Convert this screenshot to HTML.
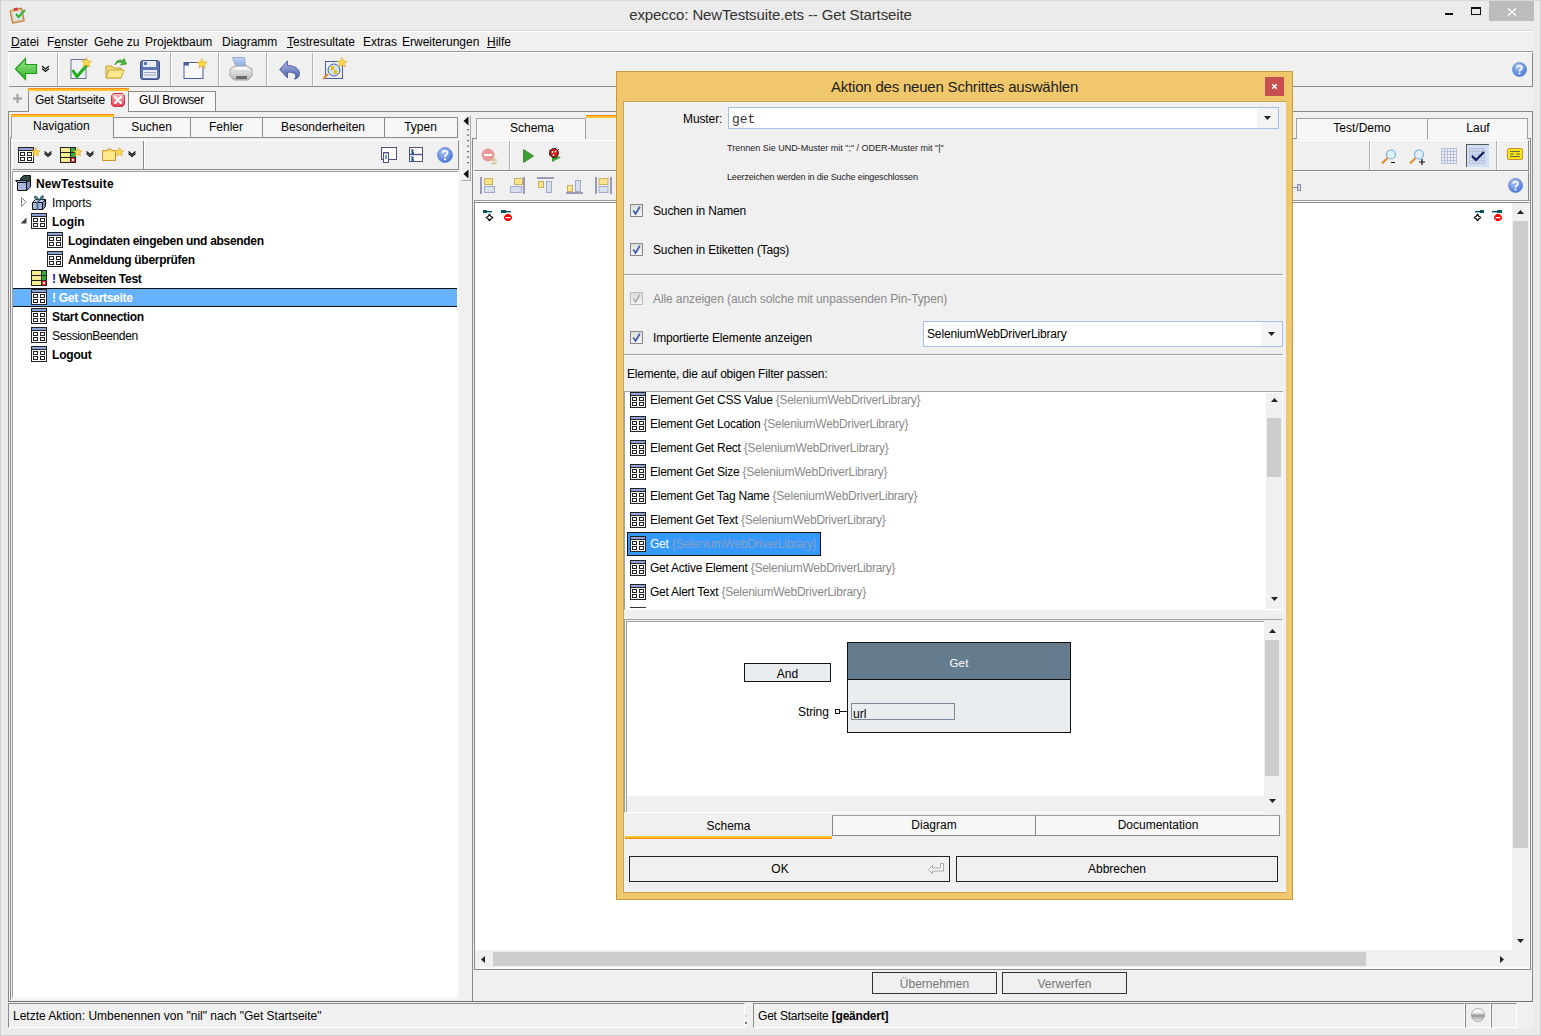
<!DOCTYPE html><html><head><meta charset="utf-8"><style>
html,body{margin:0;padding:0;}
body{width:1541px;height:1036px;position:relative;overflow:hidden;background:#ebebeb;font-family:"Liberation Sans",sans-serif;}
.a{position:absolute;box-sizing:border-box;}
.t{position:absolute;white-space:pre;}
svg{position:absolute;overflow:visible;}
</style></head><body>
<div class="a" style="left:0px;top:0px;width:1541px;height:1036px;background:#ebebeb"></div>
<div class="a" style="left:0px;top:0px;width:1px;height:1036px;background:#cfcfcf"></div>
<div class="a" style="left:0px;top:1035px;width:1541px;height:1px;background:#cfcfcf"></div>
<div class="a" style="left:1540px;top:0px;width:1px;height:1036px;background:#cfcfcf"></div>
<div class="a" style="left:0px;top:0px;width:1541px;height:1px;background:#d8d8d8"></div>
<div class="t" style="left:0px;top:7px;font-size:15px;line-height:15px;color:#333;font-family:'Liberation Sans';width:1541px;text-align:center;letter-spacing:-0.12px">expecco: NewTestsuite.ets -- Get Startseite</div>
<div class="a" style="left:1445px;top:13px;width:8px;height:2px;background:#111"></div>
<div class="a" style="left:1471px;top:7px;width:10px;height:8px;border:1px solid #111;border-top-width:2px"></div>
<div class="a" style="left:1489px;top:1px;width:45px;height:20px;background:#bcbcbc"></div>
<svg style="left:1507px;top:8px" width="10" height="8" viewBox="0 0 10 8"><path d="M1 0.5 L9 7.5 M9 0.5 L1 7.5" stroke="#fff" stroke-width="1.6"/></svg>
<svg style="left:9px;top:6px" width="18" height="17" viewBox="0 0 18 17"><g transform="rotate(-12 9 9)"><rect x="2" y="3" width="12" height="13" rx="1" fill="#e8c48a" stroke="#b07a3a"/><rect x="4" y="5" width="8" height="9" fill="#dfe8f5"/><rect x="6" y="1.5" width="4" height="3" fill="#c44" /></g><path d="M7 8 L9.5 11 L16 4" stroke="#3cb03c" stroke-width="2.2" fill="none"/></svg>
<div class="a" style="left:8px;top:30px;width:1525px;height:998px;background:#f0f0f0"></div>
<div class="a" style="left:8px;top:30px;width:1525px;height:22px;background:#f0f0f0;border-bottom:1px solid #999;border-top:1px solid #d8d8d8;box-shadow:inset 0 1px 0 #fff"></div>
<div class="t" style="left:11px;top:36px;font-size:12px;line-height:12px;color:#000;font-family:'Liberation Sans';letter-spacing:0px"><u>D</u>atei</div>
<div class="t" style="left:47px;top:36px;font-size:12px;line-height:12px;color:#000;font-family:'Liberation Sans';letter-spacing:0px">F<u>e</u>nster</div>
<div class="t" style="left:94px;top:36px;font-size:12px;line-height:12px;color:#000;font-family:'Liberation Sans';letter-spacing:0px">Gehe zu</div>
<div class="t" style="left:145px;top:36px;font-size:12px;line-height:12px;color:#000;font-family:'Liberation Sans';letter-spacing:0px">Projektbaum</div>
<div class="t" style="left:222px;top:36px;font-size:12px;line-height:12px;color:#000;font-family:'Liberation Sans';letter-spacing:0px">Diagramm</div>
<div class="t" style="left:287px;top:36px;font-size:12px;line-height:12px;color:#000;font-family:'Liberation Sans';letter-spacing:0px"><u>T</u>estresultate</div>
<div class="t" style="left:363px;top:36px;font-size:12px;line-height:12px;color:#000;font-family:'Liberation Sans';letter-spacing:0px">Extras</div>
<div class="t" style="left:402px;top:36px;font-size:12px;line-height:12px;color:#000;font-family:'Liberation Sans';letter-spacing:0px">Erweiterungen</div>
<div class="t" style="left:487px;top:36px;font-size:12px;line-height:12px;color:#000;font-family:'Liberation Sans';letter-spacing:0px"><u>H</u>ilfe</div>
<div class="a" style="left:8px;top:52px;width:1525px;height:35px;background:#f0f0f0;border-bottom:1px solid #8a8a8a;border-top:1px solid #fff;border-right:1px solid #8a8a8a"></div>
<div class="a" style="left:57px;top:53px;width:1px;height:33px;background:#b0b0b0;box-shadow:1px 0 0 #fff"></div>
<div class="a" style="left:170px;top:53px;width:1px;height:33px;background:#b0b0b0;box-shadow:1px 0 0 #fff"></div>
<div class="a" style="left:218px;top:53px;width:1px;height:33px;background:#b0b0b0;box-shadow:1px 0 0 #fff"></div>
<div class="a" style="left:266px;top:53px;width:1px;height:33px;background:#b0b0b0;box-shadow:1px 0 0 #fff"></div>
<div class="a" style="left:312px;top:53px;width:1px;height:33px;background:#b0b0b0;box-shadow:1px 0 0 #fff"></div>
<div class="a" style="left:8px;top:52px;width:1px;height:35px;background:#fff"></div>
<svg style="left:14px;top:57px" width="24" height="24" viewBox="0 0 24 24"><defs><linearGradient id="ga" x1="0" y1="0" x2="0" y2="1"><stop offset="0" stop-color="#9be88a"/><stop offset="1" stop-color="#2fb52a"/></linearGradient></defs><path d="M1.5 12 L11.5 1.5 V7.5 H22.5 V16.5 H11.5 V22.5 Z" fill="url(#ga)" stroke="#1f9a1c" stroke-width="1.2"/></svg>
<svg style="left:41px;top:65px" width="9" height="7" viewBox="0 0 9 7"><path d="M1 1 L4.5 4 L8 1 M1 3.5 L4.5 6.5 L8 3.5" stroke="#111" stroke-width="1.2" fill="none"/></svg>
<svg style="left:70px;top:57px" width="22" height="23" viewBox="0 0 22 23"><rect x="1" y="2.5" width="15" height="19" fill="#eef0f5" stroke="#6a7488"/><path d="M2.5 13 L7 19.5 L17 8" stroke="#19b019" stroke-width="3" fill="none"/><path d="M16.5 0.5 L18 4 L21.5 4.2 L18.8 6.5 L19.8 10 L16.5 8 L13.2 10 L14.2 6.5 L11.5 4.2 L15 4 Z" fill="#ffd84a" stroke="#d6a21a" stroke-width="0.6"/></svg>
<svg style="left:105px;top:57px" width="22" height="23" viewBox="0 0 22 23"><path d="M1 9 H7 L9 11 H16 V21 H1 Z" fill="#f3d774" stroke="#c9a33a"/><path d="M1 21 L4 13 H19 L16 21 Z" fill="#fbe98f" stroke="#c9a33a"/><path d="M10 8 C11 3 15 2 18 4 L19 1.5 L21.5 7 L15.5 8 L17.5 6 C15 4.5 12 5 10 8 Z" fill="#4cba3c" stroke="#2c8a22" stroke-width="0.7"/></svg>
<svg style="left:140px;top:60px" width="20" height="20" viewBox="0 0 20 20"><rect x="0.5" y="0.5" width="19" height="19" rx="2.5" fill="#5c73b5" stroke="#3d4f8a"/><rect x="3" y="1" width="13" height="6" fill="#e8ecf6"/><rect x="4" y="2" width="3" height="3" fill="#5c73b5"/><rect x="3" y="10" width="14" height="8" fill="#e8ecf6"/><path d="M4 12.5 H16 M4 15 H16" stroke="#9aa6c8"/></svg>
<svg style="left:183px;top:58px" width="24" height="22" viewBox="0 0 24 22"><rect x="1" y="4.5" width="19" height="16" fill="#f8f8fa" stroke="#4a5f9a"/><rect x="1" y="4.5" width="5" height="3" fill="#4a5f9a"/><path d="M19 0.5 L20.5 4 L24 4.2 L21.3 6.5 L22.3 10 L19 8 L15.7 10 L16.7 6.5 L14 4.2 L17.5 4 Z" fill="#ffd84a" stroke="#d6a21a" stroke-width="0.6"/></svg>
<svg style="left:229px;top:56px" width="25" height="26" viewBox="0 0 25 26"><defs><linearGradient id="gp" x1="0" y1="0" x2="0" y2="1"><stop offset="0" stop-color="#c0d4f4"/><stop offset="1" stop-color="#8aa8e0"/></linearGradient><linearGradient id="gq" x1="0" y1="0" x2="0" y2="1"><stop offset="0" stop-color="#f4f4f4"/><stop offset="1" stop-color="#b8b8b8"/></linearGradient></defs><path d="M3.5 1.5 L15.5 1.5 L16.5 11 L7 11 Z" fill="url(#gp)" stroke="#8aa0c8" stroke-width="0.8"/><path d="M1 13 L6 10 H18 L23 13 V20 L19 24 H5 L1 20 Z" fill="url(#gq)" stroke="#9a9a9a" stroke-width="0.9"/><path d="M1 15 H23" stroke="#d8d8d8"/><path d="M7 20 H18 V23 H7 Z" fill="#6a6a6a"/><path d="M8 11.5 H17 L19 13.5 H6 Z" fill="#fff"/></svg>
<svg style="left:279px;top:60px" width="21" height="20" viewBox="0 0 21 20"><defs><linearGradient id="gu" x1="0" y1="0" x2="0" y2="1"><stop offset="0" stop-color="#a8b8e8"/><stop offset="1" stop-color="#4a5ea8"/></linearGradient></defs><path d="M0.6 9.5 L8.5 0.8 V5.5 C15 5.5 20.5 8.5 20.5 13.5 C20.5 16.5 18.5 18.5 15.5 19.2 C17.5 17 17.5 13.5 13 12.5 C11.5 12.2 10 12.2 8.5 12.4 V18 Z" fill="url(#gu)" stroke="#3f4f90" stroke-width="0.8"/></svg>
<svg style="left:322px;top:57px" width="25" height="23" viewBox="0 0 25 23"><rect x="3.5" y="4.5" width="17" height="17" fill="#eef0f8" stroke="#4a5f9a"/><circle cx="12" cy="13" r="6" fill="#cfe4f4" stroke="#4a5f9a"/><rect x="9" y="9" width="3" height="4" fill="#f0b800"/><rect x="12" y="13" width="3" height="4" fill="#f0b800"/><path d="M6 17 L1 22" stroke="#e08a3a" stroke-width="2"/><path d="M20 0.5 L21.5 4 L25 4.2 L22.3 6.5 L23.3 10 L20 8 L16.7 10 L17.7 6.5 L15 4.2 L18.5 4 Z" fill="#ffd84a" stroke="#d6a21a" stroke-width="0.6"/></svg>
<svg style="left:1512px;top:62px" width="15" height="15" viewBox="0 0 16 16"><defs><radialGradient id="hg151262" cx="0.4" cy="0.3" r="0.8"><stop offset="0" stop-color="#a9c4f5"/><stop offset="1" stop-color="#3f6fd8"/></radialGradient></defs><circle cx="8" cy="8" r="7.5" fill="url(#hg151262)" stroke="#4a70c8" stroke-width="0.6"/><path d="M5.5 6 C5.5 3.2 10.5 3.2 10.5 6 C10.5 7.8 8 7.8 8 10" stroke="#fff" stroke-width="1.8" fill="none"/><circle cx="8" cy="12.3" r="1.1" fill="#fff"/></svg>
<div class="a" style="left:8px;top:87px;width:1525px;height:25px;background:#f0f0f0;border-bottom:1px solid #8a8a8a"></div>
<svg style="left:13px;top:94px" width="9" height="9" viewBox="0 0 9 9"><path d="M4.5 0 V9 M0 4.5 H9" stroke="#a8a8a8" stroke-width="2.4"/></svg>
<div class="a" style="left:28px;top:88px;width:101px;height:24px;background:#f0f0f0;border-left:1px solid #8a8a8a;border-right:1px solid #8a8a8a;"></div>
<div class="a" style="left:28px;top:88px;width:101px;height:3px;background:linear-gradient(#ff8a1a 0,#ff8a1a 1px,#ffc22e 1px,#ffc22e 3px)"></div>
<div class="t" style="left:35px;top:94px;font-size:12px;line-height:12px;color:#000;font-family:'Liberation Sans';letter-spacing:-0.25px">Get Startseite</div>
<svg style="left:111px;top:93px" width="14" height="14" viewBox="0 0 14 14"><defs><linearGradient id="gx" x1="0" y1="0" x2="0" y2="1"><stop offset="0" stop-color="#f2c4cc"/><stop offset="0.5" stop-color="#e87888"/><stop offset="1" stop-color="#e83a50"/></linearGradient></defs><path d="M2.5 0.5 H11.5 L13.5 2.5 V11.5 L11.5 13.5 H2.5 L0.5 11.5 V2.5 Z" fill="url(#gx)" stroke="#c83a44"/><path d="M4.2 4.2 L9.8 9.8 M9.8 4.2 L4.2 9.8" stroke="#fff" stroke-width="2.4" stroke-linecap="round"/></svg>
<div class="a" style="left:128px;top:91px;width:88px;height:21px;background:#f7f7f7;border:1px solid #8a8a8a"></div>
<div class="t" style="left:139px;top:94px;font-size:12px;line-height:12px;color:#000;font-family:'Liberation Sans';letter-spacing:-0.35px">GUI Browser</div>
<div class="a" style="left:8px;top:112px;width:452px;height:890px;background:#f0f0f0"></div>
<div class="a" style="left:8px;top:111px;width:1px;height:891px;background:#8a8a8a"></div>
<div class="a" style="left:10px;top:137px;width:1px;height:863px;background:#8a8a8a"></div>
<div class="a" style="left:11px;top:998px;width:447px;height:1px;background:#fff"></div>
<div class="a" style="left:10px;top:137px;width:448px;height:1px;background:#8a8a8a"></div>
<div class="a" style="left:11px;top:114px;width:103px;height:24px;background:#f0f0f0;border-left:1px solid #a0a0a0;border-right:1px solid #a0a0a0"></div>
<div class="a" style="left:11px;top:114px;width:103px;height:3px;background:linear-gradient(#ff8a1a 0,#ff8a1a 1px,#ffc22e 1px,#ffc22e 3px)"></div>
<div class="t" style="left:33px;top:120px;font-size:12px;line-height:12px;color:#000;font-family:'Liberation Sans';">Navigation</div>
<div class="a" style="left:113px;top:117px;width:78px;height:21px;background:#f7f7f7;border:1px solid #8a8a8a"></div>
<div class="t" style="left:113px;top:121px;font-size:12px;line-height:12px;color:#000;font-family:'Liberation Sans';width:77px;text-align:center;">Suchen</div>
<div class="a" style="left:190px;top:117px;width:73px;height:21px;background:#f7f7f7;border:1px solid #8a8a8a"></div>
<div class="t" style="left:190px;top:121px;font-size:12px;line-height:12px;color:#000;font-family:'Liberation Sans';width:72px;text-align:center;">Fehler</div>
<div class="a" style="left:262px;top:117px;width:123px;height:21px;background:#f7f7f7;border:1px solid #8a8a8a"></div>
<div class="t" style="left:262px;top:121px;font-size:12px;line-height:12px;color:#000;font-family:'Liberation Sans';width:122px;text-align:center;">Besonderheiten</div>
<div class="a" style="left:384px;top:117px;width:74px;height:21px;background:#f7f7f7;border:1px solid #8a8a8a"></div>
<div class="t" style="left:384px;top:121px;font-size:12px;line-height:12px;color:#000;font-family:'Liberation Sans';width:73px;text-align:center;">Typen</div>
<div class="a" style="left:12px;top:140px;width:447px;height:30px;background:#f0f0f0;border:1px solid #8a8a8a;border-top-color:#fff;border-left-color:#fff"></div>
<div class="a" style="left:143px;top:141px;width:1px;height:28px;background:#8a8a8a;box-shadow:1px 0 0 #fff"></div>
<svg style="left:18px;top:147px" width="24" height="17" viewBox="0 0 24 17"><rect x="0.5" y="0.5" width="15" height="15" fill="#fff" stroke="#222"/><rect x="1" y="1" width="14" height="2" fill="#8ea3d6"/><path d="M1 3.5 H15" stroke="#222"/><rect x="2.5" y="5.5" width="4" height="3" fill="none" stroke="#222"/><rect x="9.5" y="5.5" width="4" height="3" fill="none" stroke="#222"/><rect x="2.5" y="10.5" width="4" height="3" fill="none" stroke="#222"/><rect x="9.5" y="10.5" width="4" height="3" fill="none" stroke="#222"/><path d="M17.8 0.5 L19.1 3.7 L22.1 3.9 L19.8 6 L20.6 9 L17.8 7.4 L15.0 9 L15.8 6 L13.5 3.9 L16.5 3.7 Z" fill="#ffd84a" stroke="#e0b030" stroke-width="0.7"/></svg>
<svg style="left:44px;top:151px" width="8" height="6" viewBox="0 0 8 6"><path d="M0.5 0.5 L4 3.5 L7.5 0.5 M0.5 2.5 L4 5.5 L7.5 2.5" stroke="#111" stroke-width="1.1" fill="none"/></svg>
<svg style="left:60px;top:147px" width="24" height="17" viewBox="0 0 24 17"><rect x="0.5" y="0.5" width="15" height="15" fill="#f8ec90" stroke="#222"/><path d="M1 5.5 H15 M1 10.5 H15 M10.5 1 V15" stroke="#222"/><rect x="11" y="1" width="4" height="4" fill="#2fae3a"/><rect x="11" y="6" width="4" height="4" fill="#2fae3a"/><circle cx="13" cy="13" r="1.8" fill="#fff" stroke="#e01818" stroke-width="1.3"/><path d="M17.8 0.5 L19.1 3.7 L22.1 3.9 L19.8 6 L20.6 9 L17.8 7.4 L15.0 9 L15.8 6 L13.5 3.9 L16.5 3.7 Z" fill="#ffd84a" stroke="#e0b030" stroke-width="0.7"/></svg>
<svg style="left:86px;top:151px" width="8" height="6" viewBox="0 0 8 6"><path d="M0.5 0.5 L4 3.5 L7.5 0.5 M0.5 2.5 L4 5.5 L7.5 2.5" stroke="#111" stroke-width="1.1" fill="none"/></svg>
<svg style="left:102px;top:147px" width="24" height="15" viewBox="0 0 24 15"><path d="M0.5 3.5 H5 L6 2 H9 L10 3.5 H13.5 V13.5 H0.5 Z" fill="#f8dc70" stroke="#c9952a"/><rect x="1" y="5" width="12" height="8" fill="#ffe98a"/><path d="M17.5 0.5 L18.8 3.7 L21.8 3.9 L19.5 6 L20.3 9 L17.5 7.4 L14.7 9 L15.5 6 L13.2 3.9 L16.2 3.7 Z" fill="#ffd84a" stroke="#e0b030" stroke-width="0.7"/></svg>
<svg style="left:128px;top:151px" width="8" height="6" viewBox="0 0 8 6"><path d="M0.5 0.5 L4 3.5 L7.5 0.5 M0.5 2.5 L4 5.5 L7.5 2.5" stroke="#111" stroke-width="1.1" fill="none"/></svg>
<svg style="left:381px;top:147px" width="16" height="16" viewBox="0 0 16 16"><rect x="0.5" y="0.5" width="15" height="12" fill="#fff" stroke="#55507a"/><rect x="2.5" y="5.5" width="5" height="10" fill="#fff" stroke="#55507a"/><rect x="3" y="6" width="4" height="1" fill="#a8b4d8"/><path d="M5 8 V12 M5 9 H6 M5 11.5 H6" stroke="#2a6ac0" stroke-width="1.2"/></svg>
<svg style="left:409px;top:147px" width="14" height="15" viewBox="0 0 14 15"><rect x="0.5" y="0.5" width="13" height="14" fill="#fff" stroke="#55507a"/><path d="M0.5 7.5 H13.5" stroke="#55507a" stroke-width="1.4"/><path d="M3 2 V6.5 H5 M3 3.5 H5 M3 9 V13.5 H5 M3 10.5 H5" stroke="#2a6ac0" stroke-width="1.2"/></svg>
<svg style="left:437px;top:147px" width="16" height="16" viewBox="0 0 16 16"><defs><radialGradient id="hg437147" cx="0.4" cy="0.3" r="0.8"><stop offset="0" stop-color="#a9c4f5"/><stop offset="1" stop-color="#3f6fd8"/></radialGradient></defs><circle cx="8" cy="8" r="7.5" fill="url(#hg437147)" stroke="#4a70c8" stroke-width="0.6"/><path d="M5.5 6 C5.5 3.2 10.5 3.2 10.5 6 C10.5 7.8 8 7.8 8 10" stroke="#fff" stroke-width="1.8" fill="none"/><circle cx="8" cy="12.3" r="1.1" fill="#fff"/></svg>
<div class="a" style="left:12px;top:171px;width:447px;height:828px;background:#fff;border-left:1px solid #a0a0a0;border-top:1px solid #a0a0a0;border-right:2px solid #f8f8f8;border-bottom:2px solid #f8f8f8"></div>
<div class="a" style="left:461px;top:115px;width:10px;height:66px;background:#f0f0f0;border:1px solid #fafafa;border-right-color:#a8a8a8;border-bottom-color:#a8a8a8"></div>
<svg style="left:463px;top:116px" width="6" height="64" viewBox="0 0 6 64"><path d="M5.5 0.5 V9.5 L0.5 5 Z" fill="#111"/><path d="M5 13 V50" stroke="#222" stroke-dasharray="1.2 4.3" stroke-width="1.3"/><path d="M5.5 53.5 V62.5 L0.5 58 Z" fill="#111"/></svg>
<svg style="left:15px;top:175px" width="17" height="17" viewBox="0 0 17 17"><path d="M5.5 3.5 L8.5 0.5 H15.5 V5 L12 7.5 H5.5 Z" fill="#2f4848" stroke="#111"/><path d="M0.5 5.5 H11.5 L12 7.5 H2.5 Z" fill="#8ea3d6" stroke="#111"/><path d="M2.5 7.5 H11.5 V15.5 H2.5 Z" fill="#a8b8dc" stroke="#111"/><path d="M11.5 7.5 L15.5 5 V12 L11.5 15.5 Z" fill="#7d94c4" stroke="#111"/></svg>
<div class="t" style="left:36px;top:178px;font-size:12px;line-height:12px;color:#000;font-family:'Liberation Sans';font-weight:bold;letter-spacing:0.1px">NewTestsuite</div>
<svg style="left:21px;top:197px" width="6" height="10" viewBox="0 0 6 10"><path d="M0.5 0.5 L5 5 L0.5 9.5 Z" fill="#fff" stroke="#888"/></svg>
<svg style="left:32px;top:194px" width="15" height="17" viewBox="0 0 15 17"><path d="M0.5 8.5 L3.5 5.5 H13.5 L10.5 8.5 Z" fill="#c0cce8" stroke="#111"/><path d="M0.5 8.5 H10.5 V15.5 H0.5 Z" fill="#a8b8dc" stroke="#111"/><path d="M10.5 8.5 L13.5 5.5 V12.5 L10.5 15.5 Z" fill="#7d94c4" stroke="#111"/><path d="M5.5 8.5 V16 M8 5.5 L5.5 8.5" stroke="#3a6a7a" stroke-width="1.6"/><path d="M6.5 5.5 C3 0.5 1.5 3 4 5.5 M8 5.5 C10 0.5 12.5 1 10 5.5" stroke="#3a6a7a" stroke-width="1.6" fill="none"/></svg>
<div class="t" style="left:52px;top:197px;font-size:12px;line-height:12px;color:#000;font-family:'Liberation Sans';letter-spacing:-0.1px">Imports</div>
<svg style="left:20px;top:217px" width="7" height="7" viewBox="0 0 7 7"><path d="M6.5 0.5 V6.5 H0.5 Z" fill="#444"/></svg>
<svg style="left:31px;top:213px" width="16" height="16" viewBox="0 0 16 16"><rect x="0.5" y="0.5" width="15" height="15" fill="#fff" stroke="#222"/><rect x="1" y="1" width="14" height="2" fill="#8ea3d6"/><path d="M1 3.5 H15" stroke="#222"/><rect x="2.5" y="5.5" width="4" height="3" fill="none" stroke="#222"/><rect x="9.5" y="5.5" width="4" height="3" fill="none" stroke="#222"/><rect x="2.5" y="10.5" width="4" height="3" fill="none" stroke="#222"/><rect x="9.5" y="10.5" width="4" height="3" fill="none" stroke="#222"/></svg>
<div class="t" style="left:52px;top:216px;font-size:12px;line-height:12px;color:#000;font-family:'Liberation Sans';font-weight:bold;">Login</div>
<svg style="left:47px;top:232px" width="16" height="16" viewBox="0 0 16 16"><rect x="0.5" y="0.5" width="15" height="15" fill="#fff" stroke="#222"/><rect x="1" y="1" width="14" height="2" fill="#8ea3d6"/><path d="M1 3.5 H15" stroke="#222"/><rect x="2.5" y="5.5" width="4" height="3" fill="none" stroke="#222"/><rect x="9.5" y="5.5" width="4" height="3" fill="none" stroke="#222"/><rect x="2.5" y="10.5" width="4" height="3" fill="none" stroke="#222"/><rect x="9.5" y="10.5" width="4" height="3" fill="none" stroke="#222"/></svg>
<div class="t" style="left:68px;top:235px;font-size:12px;line-height:12px;color:#000;font-family:'Liberation Sans';font-weight:bold;letter-spacing:-0.3px">Logindaten eingeben und absenden</div>
<svg style="left:47px;top:251px" width="16" height="16" viewBox="0 0 16 16"><rect x="0.5" y="0.5" width="15" height="15" fill="#fff" stroke="#222"/><rect x="1" y="1" width="14" height="2" fill="#8ea3d6"/><path d="M1 3.5 H15" stroke="#222"/><rect x="2.5" y="5.5" width="4" height="3" fill="none" stroke="#222"/><rect x="9.5" y="5.5" width="4" height="3" fill="none" stroke="#222"/><rect x="2.5" y="10.5" width="4" height="3" fill="none" stroke="#222"/><rect x="9.5" y="10.5" width="4" height="3" fill="none" stroke="#222"/></svg>
<div class="t" style="left:68px;top:254px;font-size:12px;line-height:12px;color:#000;font-family:'Liberation Sans';font-weight:bold;letter-spacing:-0.3px">Anmeldung überprüfen</div>
<svg style="left:31px;top:270px" width="16" height="16" viewBox="0 0 16 16"><rect x="0.5" y="0.5" width="15" height="15" fill="#f8ec90" stroke="#222"/><path d="M1 5.5 H15 M1 10.5 H15 M10.5 1 V15" stroke="#222"/><rect x="11" y="1" width="4" height="4" fill="#2fae3a"/><rect x="11" y="6" width="4" height="4" fill="#2fae3a"/><circle cx="13" cy="13" r="1.8" fill="#fff" stroke="#e01818" stroke-width="1.3"/></svg>
<div class="t" style="left:52px;top:273px;font-size:12px;line-height:12px;color:#000;font-family:'Liberation Sans';font-weight:bold;letter-spacing:-0.3px"><span style="color:#1010e0">!</span> Webseiten Test</div>
<div class="a" style="left:13px;top:288px;width:444px;height:19px;background:#66b2ff;border-top:1px solid #111;border-bottom:1px solid #111"></div>
<svg style="left:31px;top:289px" width="16" height="16" viewBox="0 0 16 16"><rect x="0.5" y="0.5" width="15" height="15" fill="#fff" stroke="#222"/><rect x="1" y="1" width="14" height="2" fill="#8ea3d6"/><path d="M1 3.5 H15" stroke="#222"/><rect x="2.5" y="5.5" width="4" height="3" fill="none" stroke="#222"/><rect x="9.5" y="5.5" width="4" height="3" fill="none" stroke="#222"/><rect x="2.5" y="10.5" width="4" height="3" fill="none" stroke="#222"/><rect x="9.5" y="10.5" width="4" height="3" fill="none" stroke="#222"/></svg>
<div class="t" style="left:52px;top:292px;font-size:12px;line-height:12px;color:#fff;font-family:'Liberation Sans';font-weight:bold;letter-spacing:-0.3px">! Get Startseite</div>
<svg style="left:31px;top:308px" width="16" height="16" viewBox="0 0 16 16"><rect x="0.5" y="0.5" width="15" height="15" fill="#fff" stroke="#222"/><rect x="1" y="1" width="14" height="2" fill="#8ea3d6"/><path d="M1 3.5 H15" stroke="#222"/><rect x="2.5" y="5.5" width="4" height="3" fill="none" stroke="#222"/><rect x="9.5" y="5.5" width="4" height="3" fill="none" stroke="#222"/><rect x="2.5" y="10.5" width="4" height="3" fill="none" stroke="#222"/><rect x="9.5" y="10.5" width="4" height="3" fill="none" stroke="#222"/></svg>
<div class="t" style="left:52px;top:311px;font-size:12px;line-height:12px;color:#000;font-family:'Liberation Sans';font-weight:bold;letter-spacing:-0.3px">Start Connection</div>
<svg style="left:31px;top:327px" width="16" height="16" viewBox="0 0 16 16"><rect x="0.5" y="0.5" width="15" height="15" fill="#fff" stroke="#222"/><rect x="1" y="1" width="14" height="2" fill="#8ea3d6"/><path d="M1 3.5 H15" stroke="#222"/><rect x="2.5" y="5.5" width="4" height="3" fill="none" stroke="#222"/><rect x="9.5" y="5.5" width="4" height="3" fill="none" stroke="#222"/><rect x="2.5" y="10.5" width="4" height="3" fill="none" stroke="#222"/><rect x="9.5" y="10.5" width="4" height="3" fill="none" stroke="#222"/></svg>
<div class="t" style="left:52px;top:330px;font-size:12px;line-height:12px;color:#000;font-family:'Liberation Sans';letter-spacing:-0.35px">SessionBeenden</div>
<svg style="left:31px;top:346px" width="16" height="16" viewBox="0 0 16 16"><rect x="0.5" y="0.5" width="15" height="15" fill="#fff" stroke="#222"/><rect x="1" y="1" width="14" height="2" fill="#8ea3d6"/><path d="M1 3.5 H15" stroke="#222"/><rect x="2.5" y="5.5" width="4" height="3" fill="none" stroke="#222"/><rect x="9.5" y="5.5" width="4" height="3" fill="none" stroke="#222"/><rect x="2.5" y="10.5" width="4" height="3" fill="none" stroke="#222"/><rect x="9.5" y="10.5" width="4" height="3" fill="none" stroke="#222"/></svg>
<div class="t" style="left:52px;top:349px;font-size:12px;line-height:12px;color:#000;font-family:'Liberation Sans';font-weight:bold;letter-spacing:-0.2px">Logout</div>
<div class="a" style="left:472px;top:112px;width:1061px;height:890px;background:#f0f0f0"></div>
<div class="a" style="left:1532px;top:111px;width:1px;height:891px;background:#8a8a8a"></div>
<div class="a" style="left:472px;top:138px;width:1059px;height:1px;background:#8a8a8a"></div>
<div class="a" style="left:472px;top:138px;width:1px;height:864px;background:#8a8a8a"></div>
<div class="a" style="left:1530px;top:138px;width:1px;height:832px;background:#8a8a8a"></div>
<div class="a" style="left:476px;top:118px;width:110px;height:21px;background:#f7f7f7;border:1px solid #a0a0a0;border-bottom:none"></div>
<div class="t" style="left:510px;top:122px;font-size:12px;line-height:12px;color:#000;font-family:'Liberation Sans';">Schema</div>
<div class="a" style="left:586px;top:138px;width:30px;height:1px;background:#f0f0f0"></div>
<div class="a" style="left:586px;top:115px;width:30px;height:3px;background:linear-gradient(#ff8a1a 0,#ff8a1a 1px,#ffc22e 1px,#ffc22e 3px)"></div>
<div class="a" style="left:1296px;top:118px;width:132px;height:21px;background:#f7f7f7;border:1px solid #a0a0a0;border-bottom:none"></div>
<div class="t" style="left:1296px;top:122px;font-size:12px;line-height:12px;color:#000;font-family:'Liberation Sans';width:132px;text-align:center;">Test/Demo</div>
<div class="a" style="left:1428px;top:118px;width:100px;height:21px;background:#f7f7f7;border:1px solid #a0a0a0;border-bottom:none;border-left:none"></div>
<div class="t" style="left:1428px;top:122px;font-size:12px;line-height:12px;color:#000;font-family:'Liberation Sans';width:100px;text-align:center;">Lauf</div>
<div class="a" style="left:474px;top:140px;width:1055px;height:31px;background:#f0f0f0;border-bottom:1px solid #8a8a8a;border-right:1px solid #8a8a8a;border-top:1px solid #fff"></div>
<div class="a" style="left:509px;top:141px;width:1px;height:29px;background:#b0b0b0;box-shadow:1px 0 0 #fff"></div>
<div class="a" style="left:1369px;top:141px;width:1px;height:29px;background:#b0b0b0;box-shadow:1px 0 0 #fff"></div>
<div class="a" style="left:1496px;top:141px;width:1px;height:29px;background:#b0b0b0;box-shadow:1px 0 0 #fff"></div>
<div class="a" style="left:474px;top:171px;width:1055px;height:30px;background:#f0f0f0;border-bottom:1px solid #8a8a8a;border-right:1px solid #8a8a8a;border-top:1px solid #fff"></div>
<svg style="left:481px;top:148px" width="17" height="16" viewBox="0 0 17 16"><circle cx="7" cy="7" r="6.5" fill="#e89a9a"/><rect x="3" y="6" width="8" height="2" fill="#fff"/><path d="M13 9 V15 M10 12 H16 M10 15.5 H16" stroke="#d8c890" stroke-width="1.3"/></svg>
<svg style="left:523px;top:149px" width="11" height="14" viewBox="0 0 11 14"><path d="M0.5 0.5 L10.5 7 L0.5 13.5 Z" fill="#3aa030" stroke="#2a7a22" stroke-width="0.8"/></svg>
<svg style="left:548px;top:147px" width="14" height="16" viewBox="0 0 14 16"><path d="M4 7 L13 10.5 L4 15 Z" fill="#3aa030"/><circle cx="6" cy="6" r="4.5" fill="#d41a1a" stroke="#111" stroke-width="0.8"/><circle cx="4.5" cy="5" r="0.9" fill="#fff"/><circle cx="7.5" cy="4.5" r="0.9" fill="#fff"/><circle cx="5.5" cy="8" r="0.9" fill="#fff"/><path d="M1 3 L3 4 M11 2 L9 4 M1 8 L2.5 7.5 M8 0.5 L7 2" stroke="#111" stroke-width="0.8"/></svg>
<svg style="left:480px;top:177px" width="17" height="17" viewBox="0 0 17 17"><path d="M1 0 V17" stroke="#9a9ab8" stroke-width="2"/><rect x="4.5" y="1.5" width="8" height="6" fill="#fbe58a" stroke="#c8b060"/><rect x="4.5" y="9.5" width="10" height="6" fill="#d8e0f0" stroke="#a0aac8"/></svg>
<svg style="left:510px;top:177px" width="17" height="17" viewBox="0 0 17 17"><path d="M14 0 V17" stroke="#9a9ab8" stroke-width="2"/><rect x="4.5" y="1.5" width="8" height="6" fill="#fbe58a" stroke="#c8b060"/><rect x="0.5" y="9.5" width="11" height="6" fill="#d8e0f0" stroke="#a0aac8"/></svg>
<svg style="left:537px;top:177px" width="17" height="17" viewBox="0 0 17 17"><path d="M0 1 H17" stroke="#9a9ab8" stroke-width="2"/><rect x="1.5" y="4.5" width="5" height="6" fill="#fbe58a" stroke="#c8b060"/><rect x="9.5" y="4.5" width="5" height="11" fill="#d8e0f0" stroke="#a0aac8"/></svg>
<svg style="left:566px;top:177px" width="17" height="17" viewBox="0 0 17 17"><path d="M0 16 H17" stroke="#9a9ab8" stroke-width="2"/><rect x="1.5" y="8.5" width="5" height="6" fill="#fbe58a" stroke="#c8b060"/><rect x="9.5" y="3.5" width="5" height="11" fill="#d8e0f0" stroke="#a0aac8"/></svg>
<svg style="left:595px;top:177px" width="17" height="17" viewBox="0 0 17 17"><path d="M1 0 V17 M16 0 V17" stroke="#9a9ab8" stroke-width="2"/><rect x="4" y="1.5" width="9" height="6" fill="#fbe58a" stroke="#c8b060"/><rect x="4" y="9.5" width="9" height="6" fill="#d8e0f0" stroke="#a0aac8"/></svg>
<svg style="left:1381px;top:149px" width="17" height="16" viewBox="0 0 17 16"><circle cx="10" cy="5.5" r="4.5" fill="#dff0fb" stroke="#7ab0d8" stroke-width="1.2"/><path d="M6.5 9 L1 14.5" stroke="#e0902a" stroke-width="2.2"/><path d="M10 13.5 H14" stroke="#111" stroke-width="1"/></svg>
<svg style="left:1409px;top:149px" width="17" height="16" viewBox="0 0 17 16"><circle cx="10" cy="5.5" r="4.5" fill="#dff0fb" stroke="#7ab0d8" stroke-width="1.2"/><path d="M6.5 9 L1 14.5" stroke="#e0902a" stroke-width="2.2"/><path d="M10 13 H16 M13 10 V16" stroke="#111" stroke-width="1.2"/></svg>
<svg style="left:1441px;top:148px" width="16" height="16" viewBox="0 0 16 16"><path d="M0.5 0 V16 M3.5 0 V16 M6.5 0 V16 M9.5 0 V16 M12.5 0 V16 M15.5 0 V16 M0 0.5 H16 M0 3.5 H16 M0 6.5 H16 M0 9.5 H16 M0 12.5 H16 M0 15.5 H16" stroke="#b8c0dc"/></svg>
<div class="a" style="left:1466px;top:144px;width:23px;height:23px;background:#cfe0f4;border-left:1px solid #555;border-top:1px solid #555"></div>
<svg style="left:1469px;top:148px" width="17" height="16" viewBox="0 0 17 16"><path d="M0.5 0 V16 M3.5 0 V16 M6.5 0 V16 M9.5 0 V16 M12.5 0 V16 M15.5 0 V16 M0 0.5 H16 M0 3.5 H16 M0 6.5 H16 M0 9.5 H16 M0 12.5 H16 M0 15.5 H16" stroke="#b8c0dc"/><path d="M3 8 L7 12 L15 4" stroke="#111a60" stroke-width="2.2" fill="none"/></svg>
<svg style="left:1507px;top:148px" width="16" height="12" viewBox="0 0 16 12"><rect x="0.5" y="0.5" width="15" height="11" rx="1.5" fill="#f8e818" stroke="#d08a3a"/><path d="M3 3.5 H13 M3 6 H7 M9 6 H13 M3 8.5 H13" stroke="#555" stroke-width="0.9"/></svg>
<svg style="left:1508px;top:178px" width="15" height="15" viewBox="0 0 16 16"><defs><radialGradient id="hg1508178" cx="0.4" cy="0.3" r="0.8"><stop offset="0" stop-color="#a9c4f5"/><stop offset="1" stop-color="#3f6fd8"/></radialGradient></defs><circle cx="8" cy="8" r="7.5" fill="url(#hg1508178)" stroke="#4a70c8" stroke-width="0.6"/><path d="M5.5 6 C5.5 3.2 10.5 3.2 10.5 6 C10.5 7.8 8 7.8 8 10" stroke="#fff" stroke-width="1.8" fill="none"/><circle cx="8" cy="12.3" r="1.1" fill="#fff"/></svg>
<svg style="left:1292px;top:184px" width="10" height="7" viewBox="0 0 10 7"><path d="M0 3.5 H5" stroke="#8a8aa8"/><rect x="5.5" y="0.5" width="3" height="6" fill="#d0d8ec" stroke="#8a8aa8"/></svg>
<div class="a" style="left:474px;top:200px;width:1057px;height:770px;background:#fff;border-top:1px solid #999;border-left:1px solid #8a8a8a;border-right:1px solid #8a8a8a;border-bottom:1px solid #8a8a8a"></div>
<div class="a" style="left:1528px;top:202px;width:2px;height:767px;background:#f8f8f8"></div>
<div class="a" style="left:475px;top:967px;width:1055px;height:2px;background:#f8f8f8"></div>
<div class="a" style="left:475px;top:202px;width:1054px;height:1px;background:#888"></div>
<div class="a" style="left:1512px;top:203px;width:17px;height:748px;background:#f0f0f0"></div>
<div class="a" style="left:1513px;top:221px;width:15px;height:627px;background:#cdcdcd"></div>
<div class="a" style="left:475px;top:950px;width:1037px;height:17px;background:#f0f0f0"></div>
<div class="a" style="left:493px;top:952px;width:873px;height:14px;background:#cdcdcd"></div>
<svg style="left:483px;top:210px" width="12" height="12" viewBox="0 0 12 12"><rect x="0" y="0" width="4" height="3" fill="#005656"/><rect x="4" y="1" width="5" height="1.4" fill="#005656"/><path d="M6.5 3.8 Q7.2 6.8 10.2 7.5 Q7.2 8.2 6.5 11.2 Q5.8 8.2 2.8 7.5 Q5.8 6.8 6.5 3.8 Z" fill="#fff" stroke="#000" stroke-width="1.1"/></svg>
<svg style="left:501px;top:210px" width="12" height="12" viewBox="0 0 12 12"><rect x="0" y="0" width="5" height="3" fill="#005656"/><rect x="5" y="1" width="5" height="1.4" fill="#005656"/><path d="M5.5 4 H8.5 L11 6.5 V8.5 L8.5 11 H5.5 L3 8.5 V6.5 Z" fill="#ff0000"/><rect x="4.5" y="7" width="5" height="1.3" fill="#fff"/></svg>
<svg style="left:1473px;top:210px" width="12" height="12" viewBox="0 0 12 12"><rect x="7" y="0" width="4" height="3" fill="#005656"/><rect x="2" y="1" width="5" height="1.4" fill="#005656"/><path d="M4.5 3.8 Q5.2 6.8 8.2 7.5 Q5.2 8.2 4.5 11.2 Q3.8 8.2 0.8 7.5 Q3.8 6.8 4.5 3.8 Z" fill="#fff" stroke="#000" stroke-width="1.1"/></svg>
<svg style="left:1491px;top:210px" width="12" height="12" viewBox="0 0 12 12"><rect x="6" y="0" width="5" height="3" fill="#005656"/><rect x="1" y="1" width="5" height="1.4" fill="#005656"/><path d="M5.5 4 H8.5 L11 6.5 V8.5 L8.5 11 H5.5 L3 8.5 V6.5 Z" fill="#ff0000"/><rect x="4.5" y="7" width="5" height="1.3" fill="#fff"/></svg>
<svg style="left:1517px;top:210px" width="7" height="4" viewBox="0 0 7 4"><path d="M0 4 H7 L3.5 0 Z" fill="#222"/></svg>
<svg style="left:1517px;top:939px" width="7" height="4" viewBox="0 0 7 4"><path d="M0 0 H7 L3.5 4 Z" fill="#222"/></svg>
<svg style="left:481px;top:956px" width="4" height="7" viewBox="0 0 4 7"><path d="M4 0 V7 L0 3.5 Z" fill="#222"/></svg>
<svg style="left:1500px;top:956px" width="4" height="7" viewBox="0 0 4 7"><path d="M0 0 V7 L4 3.5 Z" fill="#222"/></svg>
<div class="a" style="left:1512px;top:950px;width:17px;height:17px;background:#f0f0f0"></div>
<div class="a" style="left:872px;top:972px;width:125px;height:22px;background:#f0f0f0;border:1px solid #333"></div>
<div class="t" style="left:872px;top:978px;font-size:12px;line-height:12px;color:#777;font-family:'Liberation Sans';width:125px;text-align:center;">Übernehmen</div>
<div class="a" style="left:1002px;top:972px;width:125px;height:22px;background:#f0f0f0;border:1px solid #333"></div>
<div class="t" style="left:1002px;top:978px;font-size:12px;line-height:12px;color:#777;font-family:'Liberation Sans';width:125px;text-align:center;">Verwerfen</div>
<div class="a" style="left:8px;top:1001px;width:1525px;height:28px;background:#f0f0f0;border-top:1px solid #707070"></div>
<div class="a" style="left:8px;top:1003px;width:737px;height:25px;border-left:1px solid #8a8a8a;border-top:1px solid #8a8a8a;border-bottom:1px solid #fff;border-right:1px solid #fff"></div>
<div class="a" style="left:745px;top:1015px;width:2px;height:2px;background:#ccc"></div><div class="a" style="left:745px;top:1022px;width:2px;height:2px;background:#777"></div>
<div class="t" style="left:13px;top:1010px;font-size:12px;line-height:12px;color:#000;font-family:'Liberation Sans';">Letzte Aktion: Umbenennen von "nil" nach "Get Startseite"</div>
<div class="a" style="left:753px;top:1003px;width:712px;height:25px;border-left:1px solid #8a8a8a;border-top:1px solid #8a8a8a;border-bottom:1px solid #fff;border-right:1px solid #fff"></div>
<div class="t" style="left:758px;top:1010px;font-size:12px;line-height:12px;color:#000;font-family:'Liberation Sans';letter-spacing:-0.2px">Get Startseite <b>[geändert]</b></div>
<div class="a" style="left:1465px;top:1003px;width:26px;height:25px;border-left:1px solid #8a8a8a;border-top:1px solid #8a8a8a;border-bottom:1px solid #fff;border-right:1px solid #fff"></div>
<div class="a" style="left:1491px;top:1003px;width:26px;height:25px;border-left:1px solid #8a8a8a;border-top:1px solid #8a8a8a;border-bottom:1px solid #fff;border-right:1px solid #fff"></div>
<svg style="left:1471px;top:1008px" width="15" height="15" viewBox="0 0 15 15"><defs><linearGradient id="gb" x1="0" y1="0" x2="0" y2="1"><stop offset="0" stop-color="#fff"/><stop offset="0.3" stop-color="#f4f4f4"/><stop offset="0.55" stop-color="#999"/><stop offset="1" stop-color="#f0f0f0"/></linearGradient></defs><circle cx="7" cy="7" r="6.5" fill="url(#gb)" stroke="#9a9a9a" stroke-width="0.8"/></svg>
<div class="a" style="left:616px;top:71px;width:677px;height:829px;background:#f0c86b;border:1px solid #c49a48"></div>
<div class="a" style="left:623px;top:101px;width:663px;height:792px;border:1px solid #c8a458"></div>
<div class="t" style="left:616px;top:79px;font-size:15px;line-height:15px;color:#222;font-family:'Liberation Sans';width:677px;text-align:center;letter-spacing:-0.2px">Aktion des neuen Schrittes auswählen</div>
<div class="a" style="left:1265px;top:77px;width:19px;height:19px;background:#c84f4f"></div>
<svg style="left:1272px;top:84px" width="5" height="5" viewBox="0 0 5 5"><path d="M0.3 0.3 L4.7 4.7 M4.7 0.3 L0.3 4.7" stroke="#fff" stroke-width="1.5"/></svg>
<div class="a" style="left:624px;top:102px;width:662px;height:790px;background:#f0f0f0"></div>
<div class="t" style="left:683px;top:113px;font-size:12px;line-height:12px;color:#000;font-family:'Liberation Sans';letter-spacing:-0.1px">Muster:</div>
<div class="a" style="left:728px;top:107px;width:551px;height:22px;background:#fff;border:1px solid #a8bde8"></div>
<div class="t" style="left:732px;top:113px;font-size:13px;line-height:13px;color:#333;font-family:'Liberation Mono';">get</div>
<div class="a" style="left:1257px;top:108px;width:21px;height:20px;background:#f4f4f4"></div>
<svg style="left:1264px;top:116px" width="7" height="4" viewBox="0 0 7 4"><path d="M0 0 H7 L3.5 4 Z" fill="#222"/></svg>
<div class="t" style="left:727px;top:144px;font-size:9px;line-height:9px;color:#222;font-family:'Liberation Sans';">Trennen Sie UND-Muster mit ";" / ODER-Muster mit "|"</div>
<div class="t" style="left:727px;top:173px;font-size:9px;line-height:9px;color:#222;font-family:'Liberation Sans';letter-spacing:-0.15px">Leerzeichen werden in die Suche eingeschlossen</div>
<div class="a" style="left:630px;top:204px;width:13px;height:13px;background:linear-gradient(#dcdcdc,#f6f6f6);border:1px solid #888"></div>
<svg style="left:632px;top:206px" width="9" height="9" viewBox="0 0 9 9"><path d="M1.3 4.5 L3.6 8 L7.8 0.8" stroke="#3d5aa8" stroke-width="1.7" fill="none"/></svg>
<div class="t" style="left:653px;top:205px;font-size:12px;line-height:12px;color:#000;font-family:'Liberation Sans';letter-spacing:-0.15px">Suchen in Namen</div>
<div class="a" style="left:630px;top:243px;width:13px;height:13px;background:linear-gradient(#dcdcdc,#f6f6f6);border:1px solid #888"></div>
<svg style="left:632px;top:245px" width="9" height="9" viewBox="0 0 9 9"><path d="M1.3 4.5 L3.6 8 L7.8 0.8" stroke="#3d5aa8" stroke-width="1.7" fill="none"/></svg>
<div class="t" style="left:653px;top:244px;font-size:12px;line-height:12px;color:#000;font-family:'Liberation Sans';letter-spacing:-0.15px">Suchen in Etiketten (Tags)</div>
<div class="a" style="left:624px;top:274px;width:659px;height:2px;background:#a0a0a0;border-bottom:1px solid #fff"></div>
<div class="a" style="left:630px;top:292px;width:13px;height:13px;background:linear-gradient(#dcdcdc,#f6f6f6);border:1px solid #bbb"></div>
<svg style="left:632px;top:294px" width="9" height="9" viewBox="0 0 9 9"><path d="M1.3 4.5 L3.6 8 L7.8 0.8" stroke="#b0b0b0" stroke-width="1.7" fill="none"/></svg>
<div class="t" style="left:653px;top:293px;font-size:12px;line-height:12px;color:#8a8a8a;font-family:'Liberation Sans';letter-spacing:-0.1px">Alle anzeigen (auch solche mit unpassenden Pin-Typen)</div>
<div class="a" style="left:630px;top:331px;width:13px;height:13px;background:linear-gradient(#dcdcdc,#f6f6f6);border:1px solid #888"></div>
<svg style="left:632px;top:333px" width="9" height="9" viewBox="0 0 9 9"><path d="M1.3 4.5 L3.6 8 L7.8 0.8" stroke="#3d5aa8" stroke-width="1.7" fill="none"/></svg>
<div class="t" style="left:653px;top:332px;font-size:12px;line-height:12px;color:#000;font-family:'Liberation Sans';letter-spacing:-0.15px">Importierte Elemente anzeigen</div>
<div class="a" style="left:923px;top:321px;width:360px;height:26px;background:#fff;border:1px solid #a8bde8"></div>
<div class="t" style="left:927px;top:328px;font-size:12px;line-height:12px;color:#000;font-family:'Liberation Sans';letter-spacing:-0.15px">SeleniumWebDriverLibrary</div>
<div class="a" style="left:1261px;top:322px;width:21px;height:24px;background:#f4f4f4"></div>
<svg style="left:1268px;top:332px" width="7" height="4" viewBox="0 0 7 4"><path d="M0 0 H7 L3.5 4 Z" fill="#222"/></svg>
<div class="a" style="left:624px;top:354px;width:659px;height:2px;background:#a0a0a0;border-bottom:1px solid #fff"></div>
<div class="t" style="left:627px;top:368px;font-size:12px;line-height:12px;color:#000;font-family:'Liberation Sans';letter-spacing:-0.2px">Elemente, die auf obigen Filter passen:</div>
<div class="a" style="left:624px;top:391px;width:659px;height:219px;background:#fff;border-top:1px solid #a0a0a0;border-left:1px solid #a0a0a0"></div>
<svg style="left:630px;top:392px" width="16" height="16" viewBox="0 0 16 16"><rect x="0.5" y="0.5" width="15" height="15" fill="#fff" stroke="#222"/><rect x="1" y="1" width="14" height="2" fill="#8ea3d6"/><path d="M1 3.5 H15" stroke="#222"/><rect x="2.5" y="5.5" width="4" height="3" fill="none" stroke="#222"/><rect x="9.5" y="5.5" width="4" height="3" fill="none" stroke="#222"/><rect x="2.5" y="10.5" width="4" height="3" fill="none" stroke="#222"/><rect x="9.5" y="10.5" width="4" height="3" fill="none" stroke="#222"/></svg>
<div class="t" style="left:650px;top:394px;font-size:12px;line-height:12px;color:#000;font-family:'Liberation Sans';letter-spacing:-0.25px">Element Get CSS Value <span style="color:#8a8a8a">{SeleniumWebDriverLibrary}</span></div>
<svg style="left:630px;top:416px" width="16" height="16" viewBox="0 0 16 16"><rect x="0.5" y="0.5" width="15" height="15" fill="#fff" stroke="#222"/><rect x="1" y="1" width="14" height="2" fill="#8ea3d6"/><path d="M1 3.5 H15" stroke="#222"/><rect x="2.5" y="5.5" width="4" height="3" fill="none" stroke="#222"/><rect x="9.5" y="5.5" width="4" height="3" fill="none" stroke="#222"/><rect x="2.5" y="10.5" width="4" height="3" fill="none" stroke="#222"/><rect x="9.5" y="10.5" width="4" height="3" fill="none" stroke="#222"/></svg>
<div class="t" style="left:650px;top:418px;font-size:12px;line-height:12px;color:#000;font-family:'Liberation Sans';letter-spacing:-0.25px">Element Get Location <span style="color:#8a8a8a">{SeleniumWebDriverLibrary}</span></div>
<svg style="left:630px;top:440px" width="16" height="16" viewBox="0 0 16 16"><rect x="0.5" y="0.5" width="15" height="15" fill="#fff" stroke="#222"/><rect x="1" y="1" width="14" height="2" fill="#8ea3d6"/><path d="M1 3.5 H15" stroke="#222"/><rect x="2.5" y="5.5" width="4" height="3" fill="none" stroke="#222"/><rect x="9.5" y="5.5" width="4" height="3" fill="none" stroke="#222"/><rect x="2.5" y="10.5" width="4" height="3" fill="none" stroke="#222"/><rect x="9.5" y="10.5" width="4" height="3" fill="none" stroke="#222"/></svg>
<div class="t" style="left:650px;top:442px;font-size:12px;line-height:12px;color:#000;font-family:'Liberation Sans';letter-spacing:-0.25px">Element Get Rect <span style="color:#8a8a8a">{SeleniumWebDriverLibrary}</span></div>
<svg style="left:630px;top:464px" width="16" height="16" viewBox="0 0 16 16"><rect x="0.5" y="0.5" width="15" height="15" fill="#fff" stroke="#222"/><rect x="1" y="1" width="14" height="2" fill="#8ea3d6"/><path d="M1 3.5 H15" stroke="#222"/><rect x="2.5" y="5.5" width="4" height="3" fill="none" stroke="#222"/><rect x="9.5" y="5.5" width="4" height="3" fill="none" stroke="#222"/><rect x="2.5" y="10.5" width="4" height="3" fill="none" stroke="#222"/><rect x="9.5" y="10.5" width="4" height="3" fill="none" stroke="#222"/></svg>
<div class="t" style="left:650px;top:466px;font-size:12px;line-height:12px;color:#000;font-family:'Liberation Sans';letter-spacing:-0.25px">Element Get Size <span style="color:#8a8a8a">{SeleniumWebDriverLibrary}</span></div>
<svg style="left:630px;top:488px" width="16" height="16" viewBox="0 0 16 16"><rect x="0.5" y="0.5" width="15" height="15" fill="#fff" stroke="#222"/><rect x="1" y="1" width="14" height="2" fill="#8ea3d6"/><path d="M1 3.5 H15" stroke="#222"/><rect x="2.5" y="5.5" width="4" height="3" fill="none" stroke="#222"/><rect x="9.5" y="5.5" width="4" height="3" fill="none" stroke="#222"/><rect x="2.5" y="10.5" width="4" height="3" fill="none" stroke="#222"/><rect x="9.5" y="10.5" width="4" height="3" fill="none" stroke="#222"/></svg>
<div class="t" style="left:650px;top:490px;font-size:12px;line-height:12px;color:#000;font-family:'Liberation Sans';letter-spacing:-0.25px">Element Get Tag Name <span style="color:#8a8a8a">{SeleniumWebDriverLibrary}</span></div>
<svg style="left:630px;top:512px" width="16" height="16" viewBox="0 0 16 16"><rect x="0.5" y="0.5" width="15" height="15" fill="#fff" stroke="#222"/><rect x="1" y="1" width="14" height="2" fill="#8ea3d6"/><path d="M1 3.5 H15" stroke="#222"/><rect x="2.5" y="5.5" width="4" height="3" fill="none" stroke="#222"/><rect x="9.5" y="5.5" width="4" height="3" fill="none" stroke="#222"/><rect x="2.5" y="10.5" width="4" height="3" fill="none" stroke="#222"/><rect x="9.5" y="10.5" width="4" height="3" fill="none" stroke="#222"/></svg>
<div class="t" style="left:650px;top:514px;font-size:12px;line-height:12px;color:#000;font-family:'Liberation Sans';letter-spacing:-0.25px">Element Get Text <span style="color:#8a8a8a">{SeleniumWebDriverLibrary}</span></div>
<div class="a" style="left:627px;top:532px;width:194px;height:24px;background:#3399ff;border:1px solid #111"></div>
<svg style="left:630px;top:536px" width="16" height="16" viewBox="0 0 16 16"><rect x="0.5" y="0.5" width="15" height="15" fill="#fff" stroke="#222"/><rect x="1" y="1" width="14" height="2" fill="#8ea3d6"/><path d="M1 3.5 H15" stroke="#222"/><rect x="2.5" y="5.5" width="4" height="3" fill="none" stroke="#222"/><rect x="9.5" y="5.5" width="4" height="3" fill="none" stroke="#222"/><rect x="2.5" y="10.5" width="4" height="3" fill="none" stroke="#222"/><rect x="9.5" y="10.5" width="4" height="3" fill="none" stroke="#222"/></svg>
<div class="t" style="left:650px;top:538px;font-size:12px;line-height:12px;color:#fff;font-family:'Liberation Sans';letter-spacing:-0.25px">Get <span style="color:#8aa0c0">{SeleniumWebDriverLibrary}</span></div>
<svg style="left:630px;top:560px" width="16" height="16" viewBox="0 0 16 16"><rect x="0.5" y="0.5" width="15" height="15" fill="#fff" stroke="#222"/><rect x="1" y="1" width="14" height="2" fill="#8ea3d6"/><path d="M1 3.5 H15" stroke="#222"/><rect x="2.5" y="5.5" width="4" height="3" fill="none" stroke="#222"/><rect x="9.5" y="5.5" width="4" height="3" fill="none" stroke="#222"/><rect x="2.5" y="10.5" width="4" height="3" fill="none" stroke="#222"/><rect x="9.5" y="10.5" width="4" height="3" fill="none" stroke="#222"/></svg>
<div class="t" style="left:650px;top:562px;font-size:12px;line-height:12px;color:#000;font-family:'Liberation Sans';letter-spacing:-0.25px">Get Active Element <span style="color:#8a8a8a">{SeleniumWebDriverLibrary}</span></div>
<svg style="left:630px;top:584px" width="16" height="16" viewBox="0 0 16 16"><rect x="0.5" y="0.5" width="15" height="15" fill="#fff" stroke="#222"/><rect x="1" y="1" width="14" height="2" fill="#8ea3d6"/><path d="M1 3.5 H15" stroke="#222"/><rect x="2.5" y="5.5" width="4" height="3" fill="none" stroke="#222"/><rect x="9.5" y="5.5" width="4" height="3" fill="none" stroke="#222"/><rect x="2.5" y="10.5" width="4" height="3" fill="none" stroke="#222"/><rect x="9.5" y="10.5" width="4" height="3" fill="none" stroke="#222"/></svg>
<div class="t" style="left:650px;top:586px;font-size:12px;line-height:12px;color:#000;font-family:'Liberation Sans';letter-spacing:-0.25px">Get Alert Text <span style="color:#8a8a8a">{SeleniumWebDriverLibrary}</span></div>
<div class="a" style="left:630px;top:607px;width:16px;height:3px;background:#fff;border-top:1px solid #333"></div>
<div class="a" style="left:1266px;top:393px;width:16px;height:216px;background:#f0f0f0"></div>
<div class="a" style="left:1267px;top:418px;width:14px;height:59px;background:#cdcdcd"></div>
<svg style="left:1271px;top:398px" width="7" height="4" viewBox="0 0 7 4"><path d="M0 4 H7 L3.5 0 Z" fill="#222"/></svg>
<svg style="left:1271px;top:597px" width="7" height="4" viewBox="0 0 7 4"><path d="M0 0 H7 L3.5 4 Z" fill="#222"/></svg>
<div class="a" style="left:624px;top:619px;width:659px;height:194px;background:#f0f0f0;border:1px solid #a0a0a0;border-right-color:#fff;border-bottom-color:#fff"></div>
<div class="a" style="left:626px;top:621px;width:1px;height:191px;background:#a0a0a0"></div>
<div class="a" style="left:626px;top:621px;width:638px;height:175px;background:#fff;border-top:1px solid #a0a0a0;border-left:1px solid #a0a0a0"></div>
<div class="a" style="left:1264px;top:622px;width:16px;height:191px;background:#f0f0f0"></div>
<div class="a" style="left:1265px;top:640px;width:14px;height:136px;background:#cdcdcd"></div>
<svg style="left:1269px;top:629px" width="7" height="4" viewBox="0 0 7 4"><path d="M0 4 H7 L3.5 0 Z" fill="#222"/></svg>
<svg style="left:1269px;top:799px" width="7" height="4" viewBox="0 0 7 4"><path d="M0 0 H7 L3.5 4 Z" fill="#222"/></svg>
<div class="a" style="left:744px;top:663px;width:87px;height:19px;background:#e9edf0;border:1px solid #111"></div>
<div class="t" style="left:744px;top:668px;font-size:12px;line-height:12px;color:#000;font-family:'Liberation Sans';width:87px;text-align:center;">And</div>
<div class="a" style="left:847px;top:642px;width:224px;height:91px;background:#e9edf0;border:1px solid #111"></div>
<div class="a" style="left:847px;top:642px;width:224px;height:38px;background:#647c8e;border:1px solid #111"></div>
<div class="t" style="left:847px;top:658px;font-size:11.5px;line-height:11.5px;color:#fff;font-family:'Liberation Sans';width:224px;text-align:center;letter-spacing:0.2px">Get</div>
<div class="t" style="left:798px;top:706px;font-size:12px;line-height:12px;color:#000;font-family:'Liberation Sans';letter-spacing:-0.1px">String</div>
<div class="a" style="left:835px;top:709px;width:5px;height:5px;border:1px solid #111;background:#fff"></div>
<div class="a" style="left:840px;top:711px;width:7px;height:1px;background:#111"></div>
<div class="a" style="left:851px;top:703px;width:104px;height:17px;background:#e9edf0;border:1px solid #7a8a9a"></div>
<div class="t" style="left:853px;top:708px;font-size:12px;line-height:12px;color:#000;font-family:'Liberation Sans';">url</div>
<div class="a" style="left:625px;top:815px;width:207px;height:24px;background:#f0f0f0"></div>
<div class="a" style="left:625px;top:836px;width:207px;height:3px;background:linear-gradient(#ffc22e 0,#ffc22e 2px,#ff8a1a 2px)"></div>
<div class="t" style="left:625px;top:820px;font-size:12px;line-height:12px;color:#000;font-family:'Liberation Sans';width:207px;text-align:center;">Schema</div>
<div class="a" style="left:832px;top:815px;width:204px;height:21px;background:#f7f7f7;border:1px solid #8a8a8a;border-top-color:#a0a0a0"></div>
<div class="t" style="left:832px;top:819px;font-size:12px;line-height:12px;color:#000;font-family:'Liberation Sans';width:204px;text-align:center;">Diagram</div>
<div class="a" style="left:1036px;top:815px;width:244px;height:21px;background:#f7f7f7;border:1px solid #8a8a8a;border-left:none;border-top-color:#a0a0a0"></div>
<div class="t" style="left:1036px;top:819px;font-size:12px;line-height:12px;color:#000;font-family:'Liberation Sans';width:244px;text-align:center;">Documentation</div>
<div class="a" style="left:629px;top:856px;width:321px;height:26px;background:#f0f0f0;border:1px solid #222"></div>
<div class="t" style="left:740px;top:863px;font-size:12px;line-height:12px;color:#000;font-family:'Liberation Sans';width:80px;text-align:center;">OK</div>
<svg style="left:928px;top:863px" width="17" height="12" viewBox="0 0 17 12"><path d="M0.5 6.5 L4.5 2.5 V5 H12.5 V0.5 H15.5 V8 H4.5 V10.5 Z" fill="#fafafa" stroke="#a8a8a8"/></svg>
<div class="a" style="left:956px;top:856px;width:322px;height:26px;background:#f0f0f0;border:1px solid #222"></div>
<div class="t" style="left:956px;top:863px;font-size:12px;line-height:12px;color:#000;font-family:'Liberation Sans';width:322px;text-align:center;">Abbrechen</div>
</body></html>
